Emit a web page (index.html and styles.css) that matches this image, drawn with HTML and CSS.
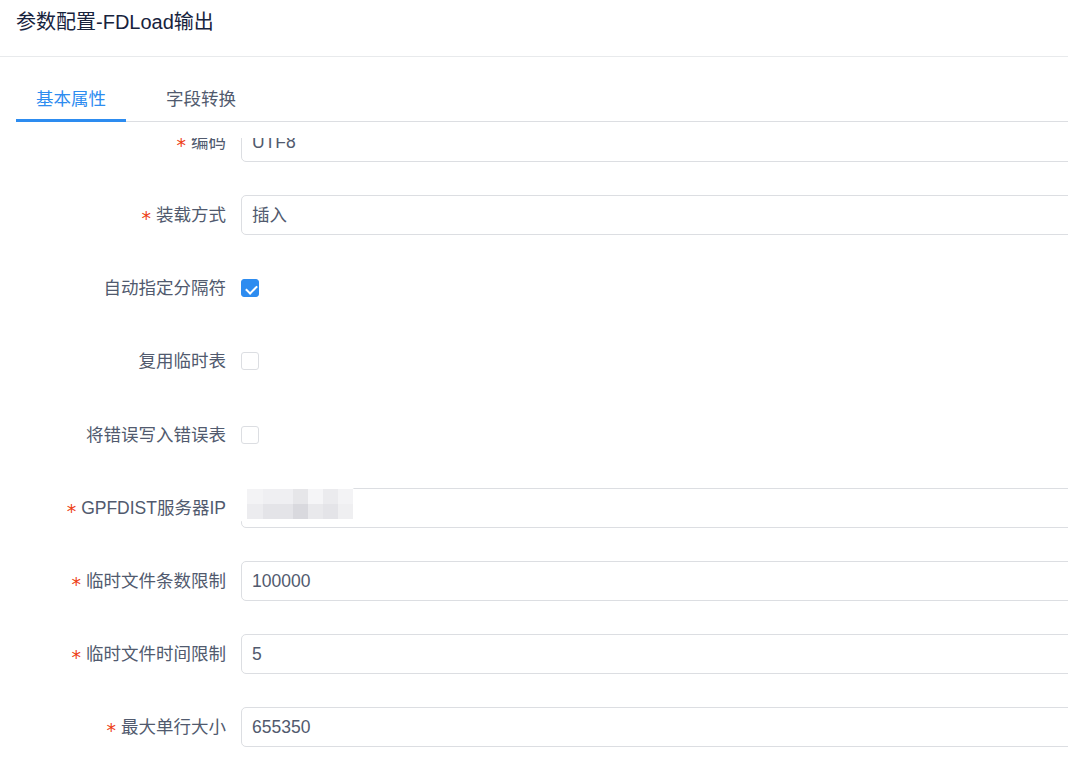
FILE: index.html
```html
<!DOCTYPE html>
<html lang="zh-CN">
<head>
<meta charset="utf-8">
<title>参数配置-FDLoad输出</title>
<link rel="stylesheet" href="styles.css">
</head>
<body>
<div class="page">
  <div class="header"><span class="title">参数配置-FDLoad输出</span></div>
  <div class="tabs">
    <div class="tab active">基本属性</div>
    <div class="tab">字段转换</div>
  </div>
  <div class="scroll">
    <div class="form">
      <div class="item">
        <label class="label"><span class="req">*</span>编码</label>
        <div class="control"><div class="input">UTF8</div></div>
      </div>
      <div class="item">
        <label class="label"><span class="req">*</span>装载方式</label>
        <div class="control"><div class="input">插入</div></div>
      </div>
      <div class="item">
        <label class="label">自动指定分隔符</label>
        <div class="control"><span class="checkbox checked"></span></div>
      </div>
      <div class="item">
        <label class="label">复用临时表</label>
        <div class="control"><span class="checkbox"></span></div>
      </div>
      <div class="item">
        <label class="label">将错误写入错误表</label>
        <div class="control"><span class="checkbox"></span></div>
      </div>
      <div class="item">
        <label class="label"><span class="req">*</span>GPFDIST服务器IP</label>
        <div class="control">
          <div class="input"></div>
          <div class="mosaic">
            <div class="mrow">
              <span class="mc w16 c1"></span><span class="mc w30 c2"></span><span class="mc w15 c3"></span><span class="mc w15 c4"></span><span class="mc w15 c5"></span><span class="mc w15 c1"></span>
            </div>
            <div class="mrow">
              <span class="mc w16 c6"></span><span class="mc w30 c7"></span><span class="mc w15 c8"></span><span class="mc w15 c9"></span><span class="mc w15 c7"></span><span class="mc w15 c10"></span>
            </div>
          </div>
        </div>
      </div>
      <div class="item">
        <label class="label"><span class="req">*</span>临时文件条数限制</label>
        <div class="control"><div class="input">100000</div></div>
      </div>
      <div class="item">
        <label class="label"><span class="req">*</span>临时文件时间限制</label>
        <div class="control"><div class="input">5</div></div>
      </div>
      <div class="item">
        <label class="label"><span class="req">*</span>最大单行大小</label>
        <div class="control"><div class="input">655350</div></div>
      </div>
    </div>
  </div>
</div>
</body>
</html>
```

FILE: styles.css
```css
* { box-sizing: border-box; }
html, body { margin: 0; padding: 0; background: #fff; }
body {
  font-family: "Liberation Sans", "Noto Sans CJK SC", sans-serif;
  color: #515a6e;
  width: 1068px;
  height: 781px;
  overflow: hidden;
}
.page { width: 1068px; height: 781px; overflow: hidden; }

.header {
  height: 57px;
  border-bottom: 1px solid #e8eaec;
  padding: 8px 16px 0;
}
.title {
  font-size: 20px;
  line-height: 28px;
  color: #17233d;
}

.tabs {
  margin-left: 16px;
  height: 65px;
  border-bottom: 1px solid #dcdee2;
  display: flex;
  align-items: flex-end;
  gap: 20px;
}
.tab {
  position: relative;
  padding: 0 20px;
  font-size: 17.5px;
  line-height: 43px;
  color: #515a6e;
}
.tab.active { color: #2d8cf0; }
.tab.active::after {
  content: "";
  position: absolute;
  left: 0;
  right: 0;
  bottom: -1px;
  height: 3px;
  background: #2d8cf0;
}

.scroll {
  margin-top: 16px;
  height: 643px;
  overflow: hidden;
}
.form {
  margin-top: -16px;
  padding-left: 16px;
  display: flex;
  flex-direction: column;
  gap: 33.125px;
}
.item {
  display: flex;
  height: 40px;
  align-items: center;
}
.label {
  width: 225px;
  flex: none;
  padding-right: 15px;
  text-align: right;
  font-size: 17.5px;
  line-height: 40px;
  color: #515a6e;
  white-space: nowrap;
}
.req {
  display: inline-block;
  color: #ed4014;
  margin-right: 5px;
  font-family: "DejaVu Sans", sans-serif;
  font-size: 19px;
  line-height: 1;
  position: relative;
  top: 4px;
}
.control {
  position: relative;
  flex: 1;
  margin-right: -30px;
  height: 40px;
  display: flex;
  align-items: center;
}
.input {
  width: 100%;
  height: 40px;
  border: 1px solid #dcdee2;
  border-radius: 5px;
  padding: 0 10px;
  font-size: 17.5px;
  line-height: 38px;
  color: #515a6e;
}

.checkbox {
  position: relative;
  display: block;
  width: 18px;
  height: 18px;
  border: 1px solid #dcdee2;
  border-radius: 3px;
  background: #fff;
}
.checkbox.checked {
  background: #2d8cf0;
  border-color: #2d8cf0;
}
.checkbox.checked::after {
  content: "";
  position: absolute;
  left: 5.5px;
  top: 2.5px;
  width: 5px;
  height: 9px;
  border: 2px solid #fff;
  border-top: 0;
  border-left: 0;
  transform: rotate(45deg);
}

.mosaic {
  position: absolute;
  left: -9px;
  top: -2px;
  width: 125px;
  height: 36px;
  background: #fff;
  border-radius: 16px 10px 18px 14px;
  padding: 3px 0 0 15px;
}
.mrow { display: flex; height: 15px; }
.mc { display: block; height: 15px; }
.w16 { width: 16px; }
.w30 { width: 30px; }
.w15 { width: 15px; }
.c1 { background: #f3f3f5; }
.c2 { background: #efeff2; }
.c3 { background: #e6e6e9; }
.c4 { background: #f5f5f7; }
.c5 { background: #ebebee; }
.c6 { background: #ececef; }
.c7 { background: #e4e4e8; }
.c8 { background: #d9d9de; }
.c9 { background: #e9e9ec; }
.c10 { background: #efeff1; }
```
